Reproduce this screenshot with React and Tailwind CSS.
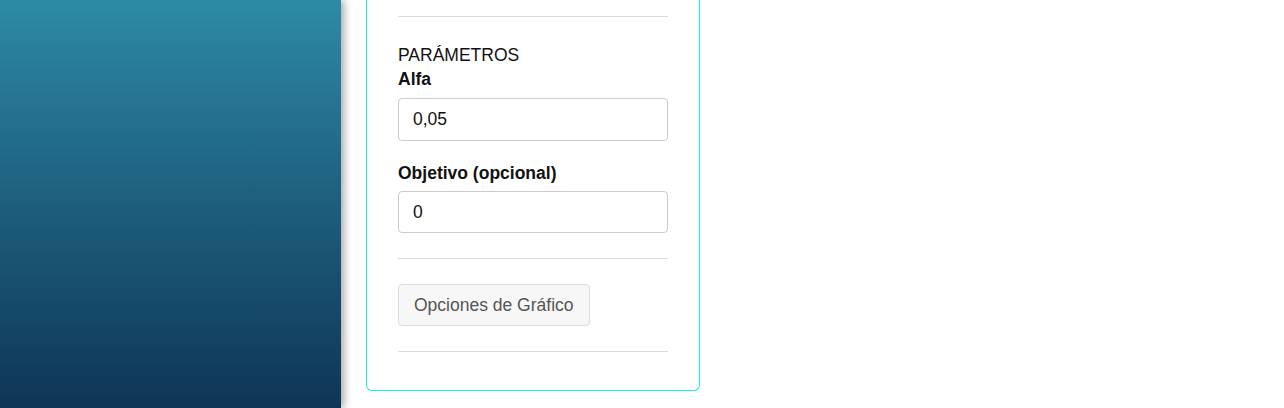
export default function App() {
  return (
    <div className="flex h-[408px] w-[1284px] overflow-hidden bg-white font-['Liberation_Sans',Arial,sans-serif] text-[#111]">
      <aside className="relative z-10 h-full w-[341px] shrink-0 bg-gradient-to-b from-[#2e8ba6] to-[#0f3556] shadow-[3px_0_8px_rgba(0,0,0,0.35)]" />
      <main className="flex-1 pl-[25px]">
        <section className="w-[334px] rounded-b-[6px] border border-t-0 border-[#14f5d2] px-[31px] pt-4 pb-[38px] text-[17.5px]">
          <hr className="border-0 border-t border-[#dcdcdc]" />
          <div className="mt-[26px]">
            <div className="leading-6">PARÁMETROS</div>
            <label className="mb-[7px] block font-bold leading-6">Alfa</label>
            <input
              type="text"
              defaultValue="0,05"
              className="block h-[43px] w-full rounded-[4px] border border-[#cccccc] px-[14px] text-[17.5px] text-[#111] outline-none"
            />
            <label className="mt-[20px] mb-[6px] block font-bold leading-6">Objetivo (opcional)</label>
            <input
              type="text"
              defaultValue="0"
              className="block h-[42px] w-full rounded-[4px] border border-[#cccccc] px-[14px] text-[17.5px] text-[#111] outline-none"
            />
          </div>
          <hr className="mt-[25px] border-0 border-t border-[#dcdcdc]" />
          <button
            type="button"
            className="mt-[25px] h-[42px] rounded-[4px] border border-[#dddddd] bg-[#f7f7f7] px-[15px] text-[#555]"
          >
            Opciones de Gráfico
          </button>
          <hr className="mt-[25px] border-0 border-t border-[#dcdcdc]" />
        </section>
      </main>
    </div>
  );
}
